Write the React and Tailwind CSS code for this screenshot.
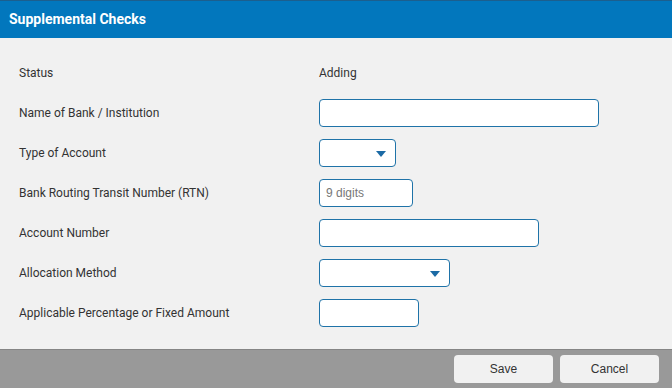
const LABEL = 'text-[12px] text-[#333333]'
const FIELD = 'h-[28px] rounded-[4px] border border-[#1f73a8] bg-white'

function Caret() {
  return (
    <svg width="10" height="6" viewBox="0 0 10 6" className="absolute right-[9px] top-[11px]">
      <path d="M0 0 H10 L5 6 Z" fill="#1b6aa5" />
    </svg>
  )
}

function Row({ label, children }) {
  return (
    <div className="flex h-[40px] items-center">
      <div className={`w-[300px] shrink-0 ${LABEL}`}>{label}</div>
      {children}
    </div>
  )
}

export default function App() {
  return (
    <div className="flex h-[388px] w-[672px] flex-col bg-[#f1f1f1] font-['Roboto',sans-serif]">
      <div className="flex h-[38px] items-center border-t border-[#1c5f8e] bg-[#0277bd] px-[9px]">
        <h1 className="text-[14px] font-bold text-white">Supplemental Checks</h1>
      </div>

      <div className="flex-1 px-[19px] pt-[15px]">
        <Row label="Status">
          <span className={LABEL}>Adding</span>
        </Row>
        <Row label="Name of Bank / Institution">
          <input type="text" className={`${FIELD} w-[280px]`} />
        </Row>
        <Row label="Type of Account">
          <div className={`relative ${FIELD} w-[77px]`}>
            <Caret />
          </div>
        </Row>
        <Row label="Bank Routing Transit Number (RTN)">
          <input
            type="text"
            placeholder="9 digits"
            className={`${FIELD} w-[94px] px-[6px] font-['Liberation_Sans',sans-serif] text-[12px] placeholder:text-[#777777]`}
          />
        </Row>
        <Row label="Account Number">
          <input type="text" className={`${FIELD} w-[220px]`} />
        </Row>
        <Row label="Allocation Method">
          <div className={`relative ${FIELD} w-[131px]`}>
            <Caret />
          </div>
        </Row>
        <Row label="Applicable Percentage or Fixed Amount">
          <input type="text" className={`${FIELD} w-[100px]`} />
        </Row>
      </div>

      <div className="flex h-[39px] items-center justify-end gap-[7px] border-t border-[#858585] bg-[#999999] pr-[13px] font-['Liberation_Sans',sans-serif]">
        <button className="h-[28px] w-[99px] rounded-[4px] bg-[#f1f1f1] text-[12px] text-[#333333]">Save</button>
        <button className="h-[28px] w-[99px] rounded-[4px] bg-[#f1f1f1] text-[12px] text-[#333333]">Cancel</button>
      </div>
    </div>
  )
}
